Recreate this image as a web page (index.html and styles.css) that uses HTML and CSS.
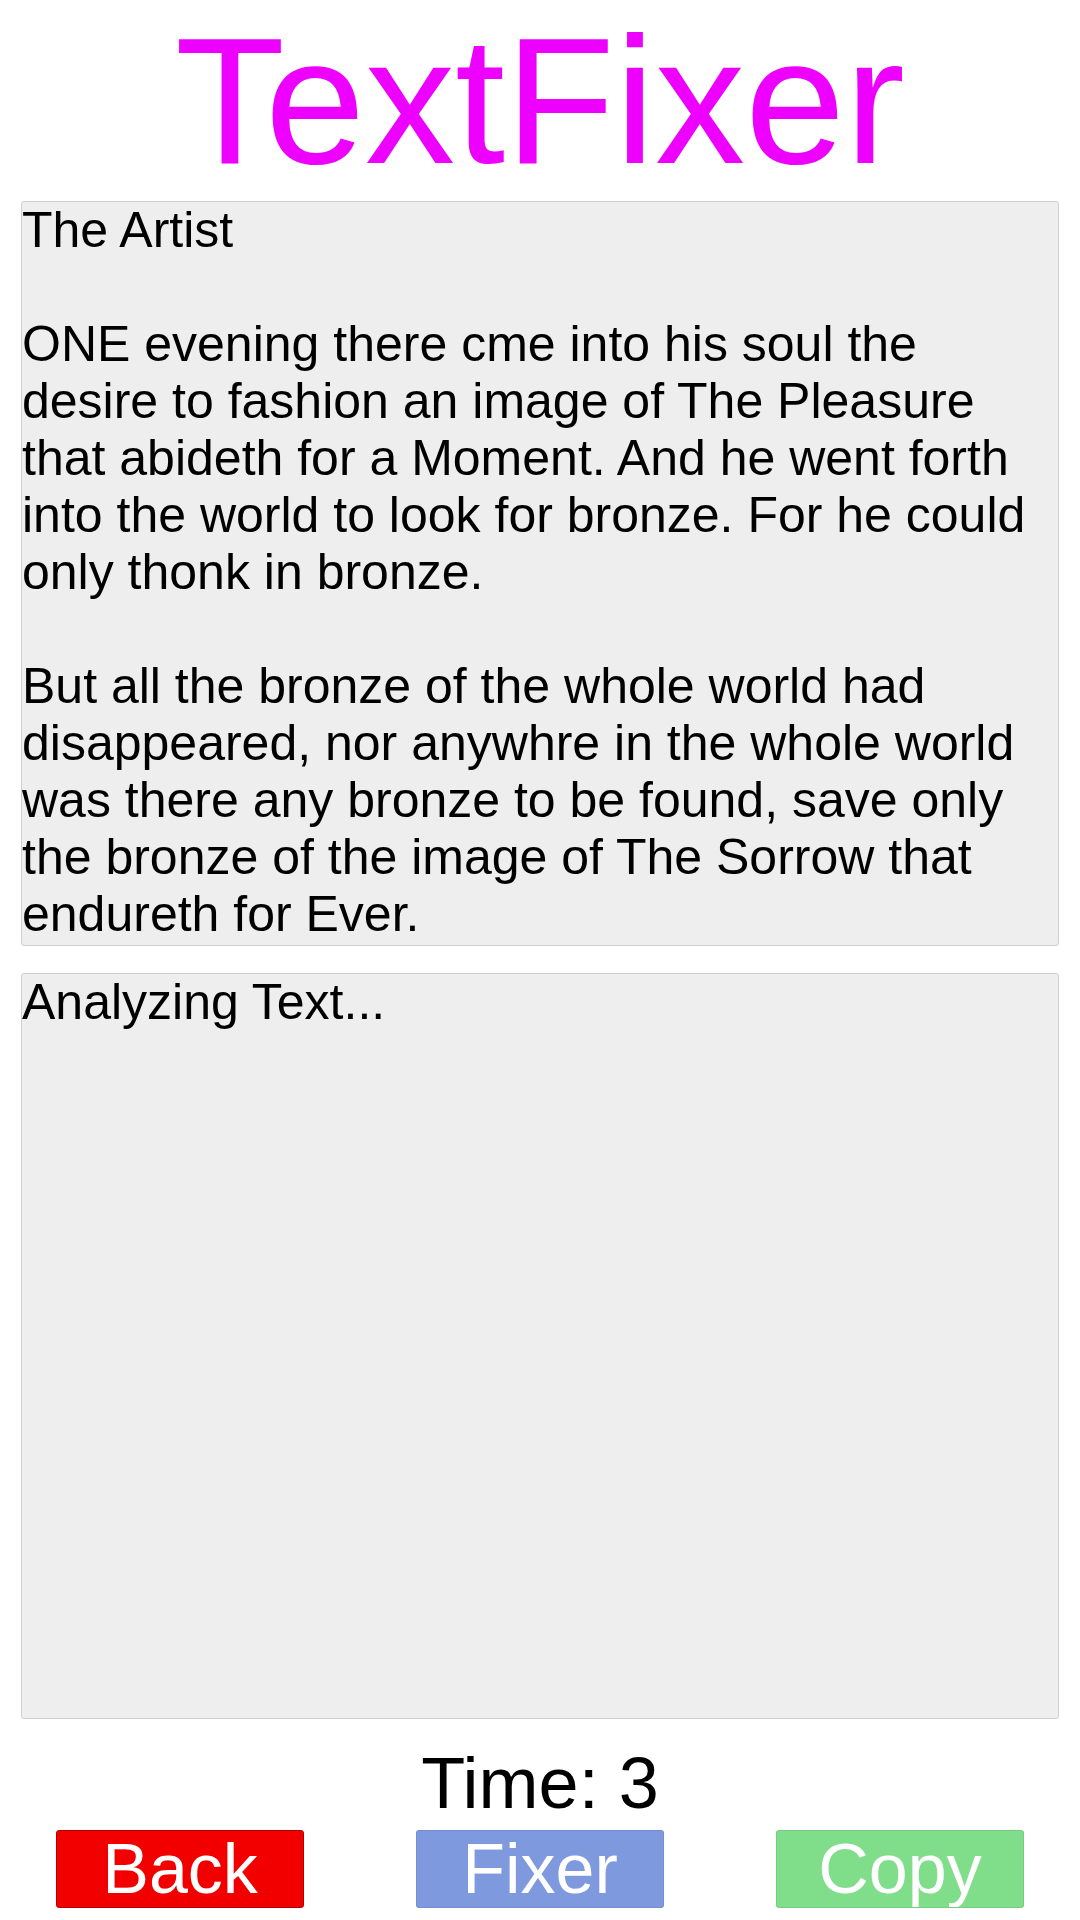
FILE: index.html
```html
<!DOCTYPE html>
<html>
<head>
<meta charset="utf-8">
<link rel="stylesheet" href="styles.css">
</head>
<body>
<div class="main">
  <h1 class="title">TextFixer</h1>
  <div class="box">
    <p>The Artist</p>
    <p>ONE evening there cme into his soul the desire to fashion an image of The Pleasure that abideth for a Moment. And he went forth into the world to look for bronze. For he could only thonk in bronze.</p>
    <p class="last">But all the bronze of the whole world had disappeared, nor anywhre in the whole world was there any bronze to be found, save only the bronze of the image of The Sorrow that endureth for Ever.</p>
  </div>
  <div class="box box2">
    <p class="last">Analyzing Text...</p>
  </div>
  <div class="time">Time: 3</div>
</div>
<div class="buttons">
  <button class="btn back">Back</button>
  <button class="btn fixer">Fixer</button>
  <button class="btn copy">Copy</button>
</div>
</body>
</html>
```

FILE: styles.css
```css
html, body {
  margin: 0;
  padding: 0;
  background: #fff;
}
body {
  font-family: "Liberation Sans", Arial, sans-serif;
  color: #000;
  width: 1080px;
  height: 1920px;
  overflow: hidden;
}
.main {
  padding: 0 21px;
}
.title {
  margin: 0;
  padding: 0;
  font-size: 180px;
  line-height: 201px;
  font-weight: normal;
  color: #ee00ff;
  text-align: center;
}
.box {
  height: 743px;
  background: #eeeeee;
  border: 1px solid #cfcfcf;
  border-radius: 3px;
  font-size: 50px;
  line-height: 57px;
  overflow: hidden;
}
.box p {
  margin: 0 0 57px 0;
}
.box p.last {
  margin-bottom: 0;
}
.box2 {
  margin-top: 27px;
  height: 744px;
}
.time {
  margin-top: 28px;
  font-size: 72px;
  line-height: 72px;
  text-align: center;
}
.buttons {
  margin-top: 11px;
  display: grid;
  grid-template-columns: repeat(3, 1fr);
  justify-items: center;
}
.btn {
  width: 248px;
  height: 78px;
  padding: 0;
  margin: 0;
  font-family: "Liberation Sans", Arial, sans-serif;
  font-size: 70px;
  line-height: 76px;
  color: #fff;
  border-radius: 3px;
  border: 1px solid rgba(0,0,0,0.08);
  text-align: center;
  overflow: hidden;
}
.back {
  background: #f20000;
  border-color: #b30000;
}
.fixer {
  background: #7f99de;
}
.copy {
  background: #80de8a;
}
```
